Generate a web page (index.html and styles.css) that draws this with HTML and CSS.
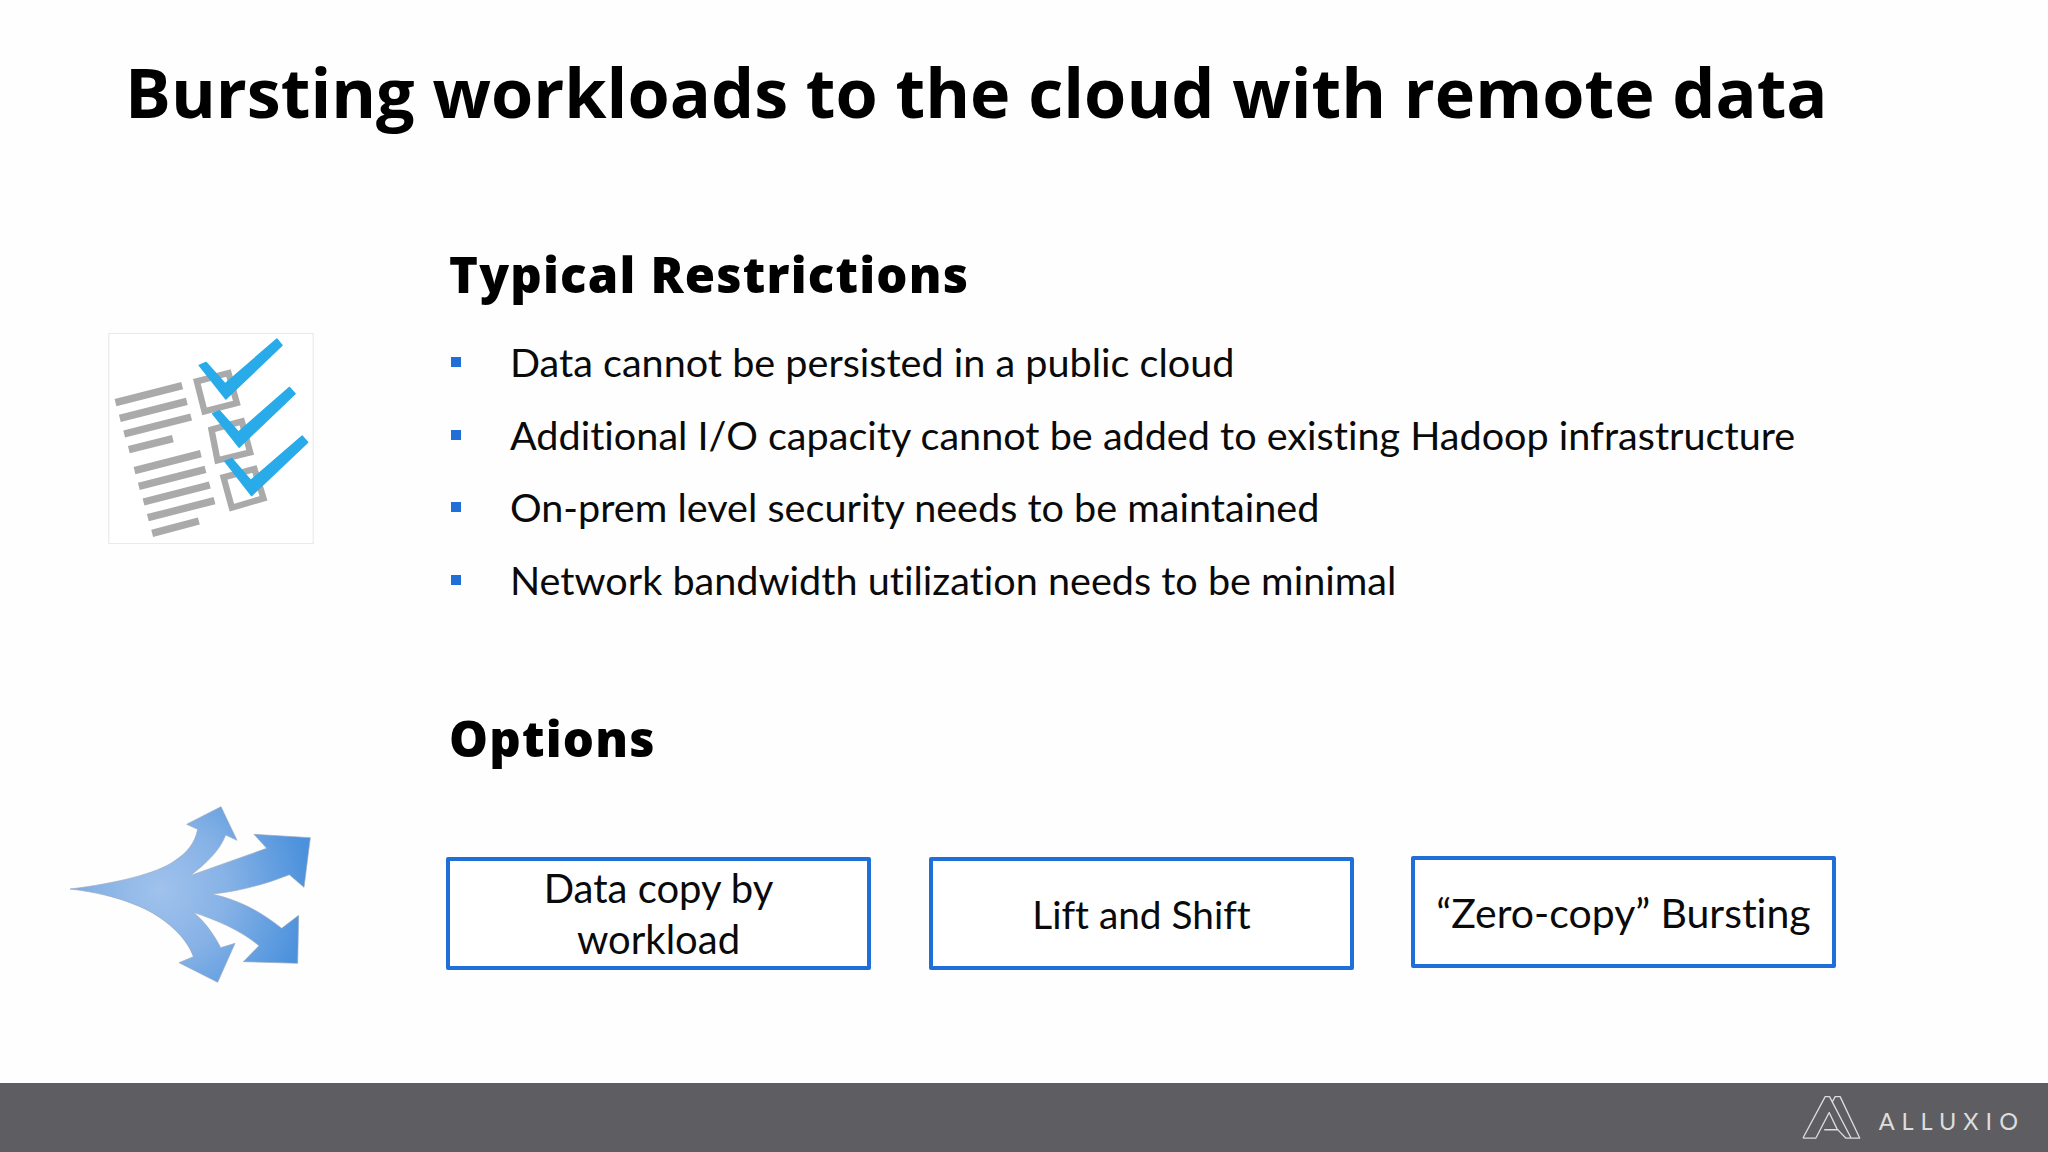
FILE: index.html
```html
<!DOCTYPE html>
<html lang="en">
<head>
<meta charset="utf-8">
<title>Bursting workloads to the cloud with remote data</title>
<link rel="stylesheet" href="styles.css">
</head>
<body>
<div class="slide">
  <header class="head"><h1 class="title">Bursting workloads to the cloud with remote data</h1></header>
  <main class="body">
    <section class="row row-restrict">
      <div class="art art-check">
        <svg class="check-img" viewBox="85 70 615 633" width="206" height="211">
          <rect x="86" y="71" width="613" height="631" fill="#fff" stroke="#e6e6e6" stroke-width="3"/>
          <g stroke="#aaaaaa" stroke-width="22" fill="none">
            <path d="M106 279L306 228M119 326L320 275M132 373L333 322M146 420L278 387M163 483L362 432M176 530L376 479M190 577L389 526M203 624L403 573M216 671L356 634"/>
            <path stroke-width="19" d="M350 215L445 190L470 280L373 305ZM394 360L485 335L510 428L412 452ZM430 503L523 478L550 566L455 594Z"/>
          </g>
          <g fill="#29abe9" stroke="#29abe9" stroke-width="4" stroke-linejoin="round">
            <path d="M357 167L378 158L435 222L590 88L606 107L437 268Z"/>
            <path d="M397 312L418 303L475 367L628 233L645 252L477 413Z"/>
            <path d="M434 455L455 446L512 512L666 379L683 398L514 558Z"/>
          </g>
        </svg>
      </div>
      <div class="content">
        <h2 class="sub">Typical Restrictions</h2>
        <ul class="list">
          <li class="item">Data cannot be persisted in a public cloud</li>
          <li class="item">Additional I/O capacity cannot be added to existing Hadoop infrastructure</li>
          <li class="item">On-prem level security needs to be maintained</li>
          <li class="item">Network bandwidth utilization needs to be minimal</li>
        </ul>
      </div>
    </section>
    <section class="row row-options">
      <div class="art art-arrows">
        <svg viewBox="0 0 900 660" width="300" height="220">
          <defs>
            <radialGradient id="arrowFill" gradientUnits="userSpaceOnUse" cx="330" cy="330" r="450">
              <stop offset="0" stop-color="#a0c2ec"/>
              <stop offset="0.45" stop-color="#86b2e6"/>
              <stop offset="1" stop-color="#4b91dc"/>
            </radialGradient>
          </defs>
          <path fill="url(#arrowFill)" stroke="#9aa9bd" stroke-width="2" d="M60 327C200 310 320 280 370 245C410 220 435 190 443 148L410 133L513 80L561 181L527 165C510 210 470 250 420 287L650 205L612 163L781 173L762 322L718 284C640 315 560 335 485 342C570 360 640 400 695 445L746 406L743 550L580 545L627 497C570 450 500 420 430 397C470 430 495 470 512 503L555 490L503 607L387 548L430 530C410 470 340 410 270 380C200 350 130 335 60 327Z"/>
        </svg>
      </div>
      <div class="content">
        <h2 class="sub">Options</h2>
        <div class="boxes">
          <div class="box">Data copy by<br>workload</div>
          <div class="box box-lift">Lift and Shift</div>
          <div class="box box-raised">“Zero-copy” Bursting</div>
        </div>
      </div>
    </section>
  </main>
  <footer class="foot">
    <svg class="logo" viewBox="130 108 178 134" width="59" height="45">
      <path fill="none" stroke="#dcdcdc" stroke-width="4" stroke-linejoin="round" d="M133 237L200 112H213L278 237H304L245 112H230L221 129M133 237H172L212 160L236 210M197 212H240M278 237H262L236 210"/>
    </svg>
    <span class="brand">ALLUXIO</span>
  </footer>
</div>
</body>
</html>
```
FILE: styles.css
```css
* { box-sizing: border-box; }
html, body { margin: 0; padding: 0; }
body { background: #fff; color: #000; font-family: "Lato", "Liberation Sans", sans-serif; font-variant-ligatures: none; }
.slide { width: 2048px; height: 1152px; display: flex; flex-direction: column; background: #fefefe; overflow: hidden; }
.head { height: 186px; padding: 46px 0 0 125px; }
.title { margin: 0; font-family: "Open Sans", sans-serif; font-weight: 700; font-size: 68.3px; line-height: 92px; color: #000; }
.body { flex: 1; display: flex; flex-direction: column; }
.row { display: grid; grid-template-columns: 449px 1fr; }
.row-restrict { height: 490px; }
.row-options { flex: 1; }
.art { display: flex; }
.art-check { padding: 147px 0 0 108px; }
.art-arrows { padding: 104px 0 0 50px; }
.check-img { display: block; }
.sub { margin: 0; font-family: "Open Sans", sans-serif; font-weight: 800; font-size: 49px; line-height: 64px; letter-spacing: 1.2px; padding-top: 56px; color: #000; }
.row-options .sub { padding-top: 30px; }
.list { list-style: none; margin: 20px 0 0; padding: 0; }
.item { position: relative; padding-left: 61px; font-size: 39.6px; line-height: 72.5px; color: #0a0a0a; }
.item::before { content: ""; position: absolute; left: 2px; top: 31px; width: 10px; height: 10px; background: #1f6fd6; }
.boxes { display: flex; gap: 58px; align-items: flex-start; margin: 85px 0 0 -3px; }
.box { width: 425px; height: 113px; margin-top: 2px; border: 4px solid #1f6fd6; border-radius: 2px; background: #fff; display: flex; align-items: center; justify-content: center; text-align: center; font-size: 40px; line-height: 51px; color: #0a0a0a; }
.box-lift { font-size: 38.8px; padding-top: 2px; }
.box-raised { margin-top: 1px; margin-left: -1px; height: 112px; font-size: 41px; }
.foot { height: 69px; flex: none; background: #5e5d62; display: flex; align-items: center; justify-content: flex-end; gap: 18px; padding-right: 23px; }
.logo { display: block; }
.brand { font-family: "Lato", sans-serif; font-weight: 400; font-size: 23.5px; letter-spacing: 7px; padding-top: 7px; color: #dddddd; }
```
